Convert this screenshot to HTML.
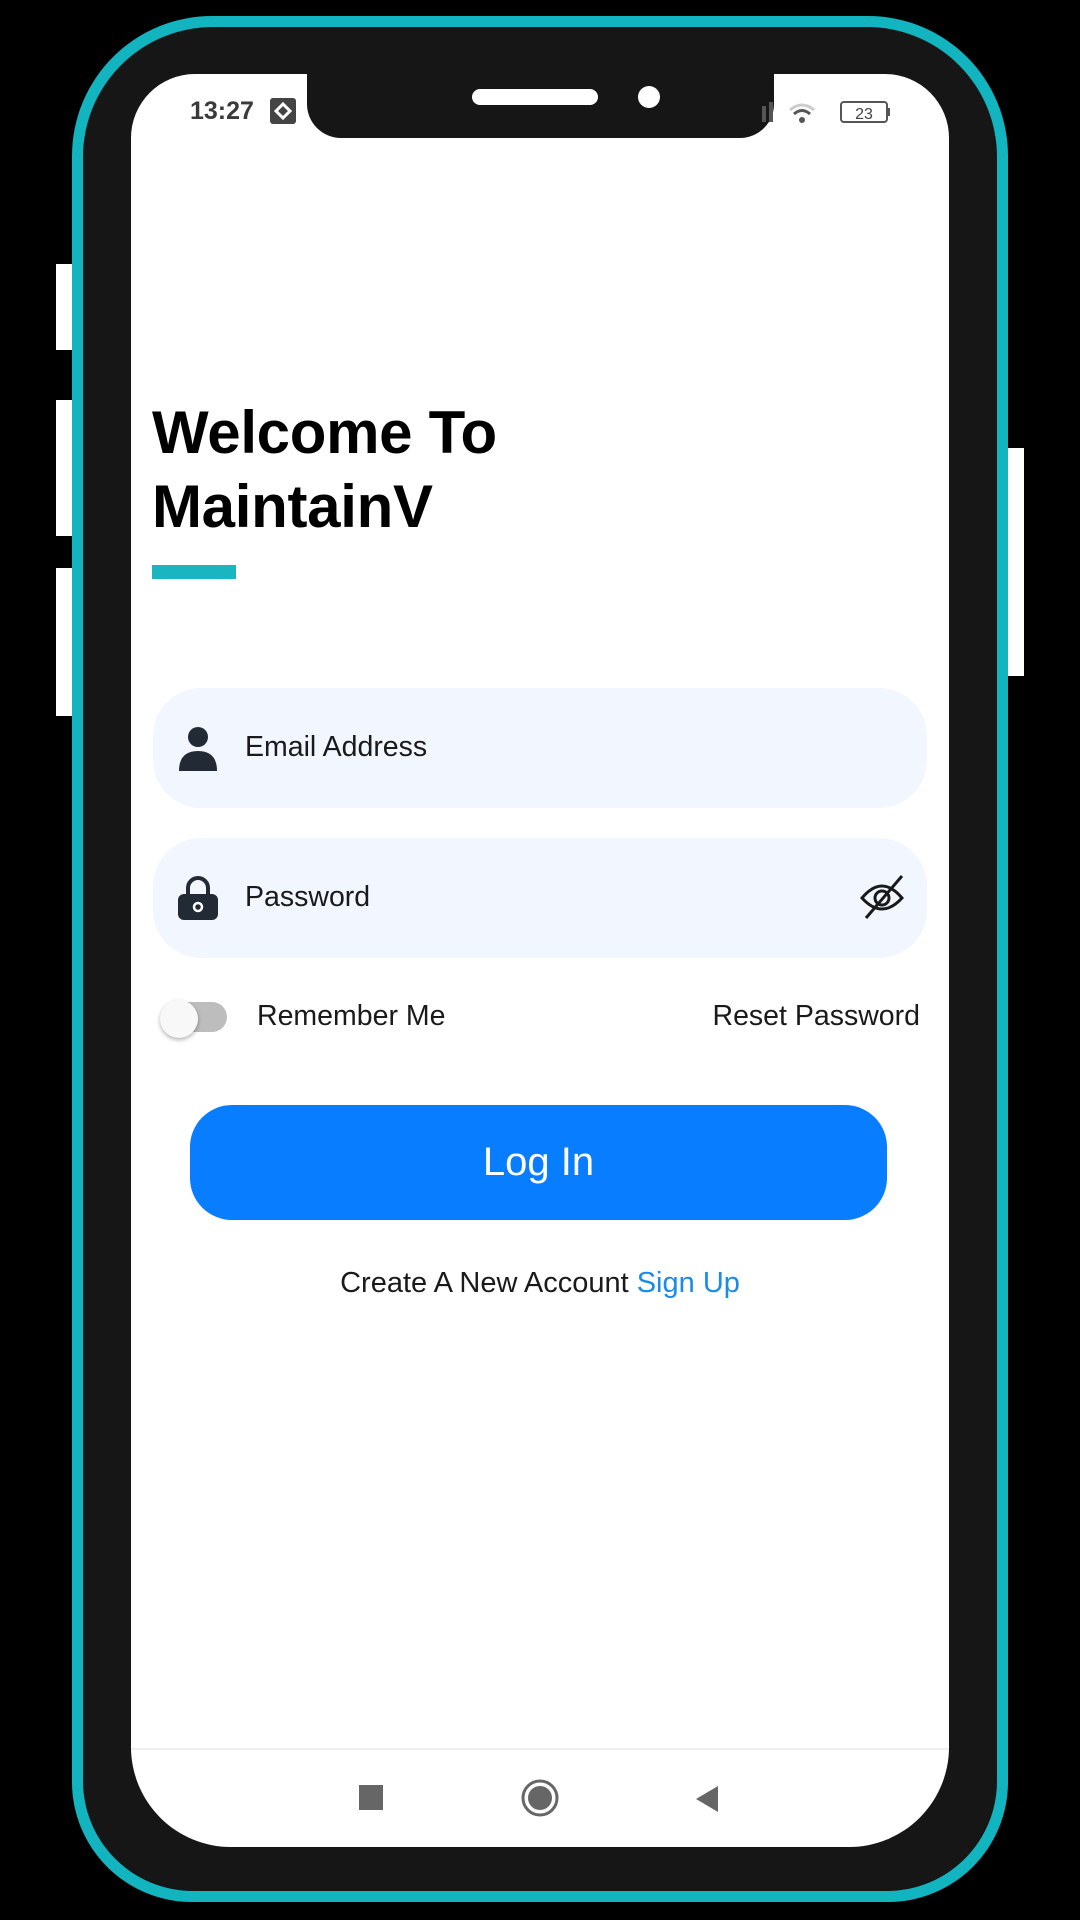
<!DOCTYPE html>
<html><head><meta charset="utf-8">
<style>
*{margin:0;padding:0;box-sizing:border-box}
html,body{width:1080px;height:1920px;background:#000;overflow:hidden;font-family:"Liberation Sans",sans-serif}
.abs{position:absolute}
.btn{background:#fff;position:absolute}
</style></head><body>
<div class="btn" style="left:56px;top:264px;width:18px;height:86px"></div>
<div class="btn" style="left:56px;top:400px;width:18px;height:136px"></div>
<div class="btn" style="left:56px;top:568px;width:18px;height:148px"></div>
<div class="btn" style="left:1005px;top:448px;width:19px;height:228px"></div>
<div class="abs" style="left:72px;top:16px;width:936px;height:1886px;background:#12b4bf;border-radius:140px 140px 120px 120px"></div>
<div class="abs" style="left:83px;top:27px;width:914px;height:1864px;background:#161616;border-radius:130px 130px 110px 110px"></div>
<div class="abs" style="left:131px;top:74px;width:818px;height:1773px;background:#fff;border-radius:64px 64px 100px 100px;overflow:hidden">
</div>
<!-- notch -->
<div class="abs" style="left:307px;top:60px;width:467px;height:78px;background:#161616;border-radius:0 0 34px 34px"></div>
<div class="abs" style="left:472px;top:89px;width:126px;height:16px;background:#fff;border-radius:8px"></div>
<div class="abs" style="left:638px;top:86px;width:22px;height:22px;background:#fff;border-radius:50%"></div>
<!-- status bar -->
<div class="abs" style="left:190px;top:96px;font-size:25px;font-weight:bold;color:#3a3a3a;line-height:30px">13:27</div>
<div class="abs" style="left:270px;top:98px;width:26px;height:26px;background:#444;border-radius:3px"></div>
<svg class="abs" style="left:270px;top:98px" width="26" height="26"><path d="M6 13 L13 6 L20 13 L13 20 Z" fill="none" stroke="#fff" stroke-width="3"/></svg>
<svg class="abs" style="left:760px;top:98px" width="150" height="30">
<rect x="2" y="8" width="4" height="16" fill="#555"/><rect x="9" y="4" width="4" height="20" fill="#555"/>
<path d="M30 12 Q42 2 54 12" fill="none" stroke="#ccc" stroke-width="3"/>
<path d="M34 16 Q42 9 50 16" fill="none" stroke="#555" stroke-width="3"/>
<circle cx="42" cy="22" r="3" fill="#555"/>
<rect x="81" y="4" width="46" height="20" rx="3" fill="none" stroke="#555" stroke-width="2"/>
<rect x="127" y="10" width="3" height="8" fill="#555"/>
<text x="104" y="21" font-family="Liberation Sans" font-size="16" text-anchor="middle" fill="#444">23</text>
</svg>
<!-- title -->
<div class="abs" style="left:152px;top:396px;font-size:60px;font-weight:bold;color:#000;line-height:74px;letter-spacing:-0.3px">Welcome To<br>MaintainV</div>
<div class="abs" style="left:152px;top:565px;width:84px;height:14px;background:#1ab5c0"></div>
<!-- fields -->
<div class="abs" style="left:153px;top:688px;width:774px;height:120px;background:#f2f6fe;border-radius:48px"></div>
<div class="abs" style="left:153px;top:838px;width:774px;height:120px;background:#f2f6fe;border-radius:48px"></div>
<svg class="abs" style="left:176px;top:725px" width="44" height="46"><circle cx="22" cy="12" r="10" fill="#222a35"/><path d="M3 46 Q3 26 22 26 Q41 26 41 46 Z" fill="#222a35"/></svg>
<div class="abs" style="left:245px;top:730px;font-size:28.5px;color:#1a1a1a;line-height:34px">Email Address</div>
<svg class="abs" style="left:176px;top:874px" width="44" height="46"><path d="M12 20 V14 A10 10 0 0 1 32 14 V20" fill="none" stroke="#222a35" stroke-width="4"/><rect x="2" y="20" width="40" height="26" rx="6" fill="#222a35"/><circle cx="22" cy="33" r="4" fill="none" stroke="#fff" stroke-width="2.5"/></svg>
<div class="abs" style="left:245px;top:880px;font-size:28.5px;color:#1a1a1a;line-height:34px">Password</div>
<svg class="abs" style="left:858px;top:872px" width="50" height="50"><path d="M4 26 Q24 2 44 26 Q24 48 4 26 Z" fill="none" stroke="#1a1a1a" stroke-width="3"/><circle cx="24" cy="26" r="7" fill="none" stroke="#1a1a1a" stroke-width="3"/><path d="M8 46 L44 4" stroke="#1a1a1a" stroke-width="3"/></svg>
<!-- toggle row -->
<div class="abs" style="left:170px;top:1002px;width:57px;height:30px;background:#bdbdbd;border-radius:15px"></div>
<div class="abs" style="left:160px;top:1000px;width:38px;height:38px;background:#f8f8f8;border-radius:50%;box-shadow:0 2px 4px rgba(0,0,0,.3)"></div>
<div class="abs" style="left:257px;top:999px;font-size:28.5px;color:#1a1a1a;line-height:34px">Remember Me</div>
<div class="abs" style="right:160px;top:999px;font-size:28.5px;color:#1a1a1a;line-height:34px">Reset Password</div>
<!-- button -->
<div class="abs" style="left:190px;top:1105px;width:697px;height:115px;background:#087dff;border-radius:42px;color:#fff;font-size:40px;text-align:center;line-height:115px">Log In</div>
<div class="abs" style="left:131px;width:818px;top:1266px;text-align:center;font-size:29px;color:#1a1a1a;line-height:34px">Create A New Account <span style="color:#1a8ce8">Sign Up</span></div>
<!-- nav -->
<div class="abs" style="left:131px;top:1748px;width:818px;height:2px;background:#efefef"></div>
<div class="abs" style="left:359px;top:1785px;width:24px;height:25px;background:#666"></div>
<svg class="abs" style="left:520px;top:1778px" width="40" height="40"><circle cx="20" cy="20" r="17" fill="none" stroke="#666" stroke-width="3"/><circle cx="20" cy="20" r="12" fill="#666"/></svg>
<svg class="abs" style="left:692px;top:1784px" width="28" height="30"><path d="M26 2 V28 L4 15 Z" fill="#666"/></svg>
</body></html>
